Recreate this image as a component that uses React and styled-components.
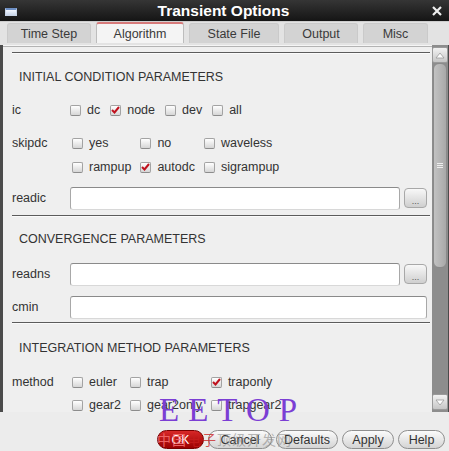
import React from 'react';
import styled, { createGlobalStyle } from 'styled-components';

const GlobalStyle = createGlobalStyle`
  html, body {
    margin: 0;
    padding: 0;
    background: #ececec;
  }
  body {
    font-family: "Liberation Sans", Arial, sans-serif;
  }
`;

const Window = styled.div`
  position: relative;
  width: 449px;
  height: 451px;
  display: flex;
  flex-direction: column;
  background: #ececec;
  overflow: hidden;
  font-size: 12.5px;
  color: #333;
`;

const TitleBar = styled.div`
  height: 21px;
  flex-shrink: 0;
  display: grid;
  grid-template-columns: 1fr auto 1fr;
  align-items: center;
  padding: 0 7px 0 5px;
  background: linear-gradient(#353535, #151515);
  color: #fff;
  font-weight: bold;
  font-size: 15.5px;
`;

const WinIcon = styled.span`
  width: 12px;
  height: 8px;
  box-sizing: border-box;
  border: 1px solid #c8d4e6;
  border-top: 2px solid #6d8fc4;
  background: linear-gradient(#f4f8ff, #c9d6ea);
  margin-top: 2px;
`;

const Close = styled.span`
  justify-self: end;
  display: flex;
`;

const TabBar = styled.div`
  height: 24px;
  flex-shrink: 0;
  box-sizing: border-box;
  display: flex;
  align-items: flex-end;
  gap: 5px;
  padding: 0 0 2px 7px;
  background: #e3e3e3;
  border-top: 1px solid #cdcdcd;
`;

const Tab = styled.div`
  width: ${({ $w }) => $w}px;
  height: ${({ $active }) => ($active ? 21 : 20)}px;
  box-sizing: border-box;
  display: flex;
  align-items: center;
  justify-content: center;
  background: ${({ $active }) => ($active ? '#f4f4f4' : '#d3d3d3')};
  border: 1px solid ${({ $active }) => ($active ? '#bdbdbd' : '#cacaca')};
  border-top: ${({ $active }) => ($active ? '2px solid #d77a7a' : '1px solid #cacaca')};
  border-bottom: none;
  border-radius: 3px 3px 0 0;
  color: #3a3a3a;
`;

const Body = styled.div`
  height: 367px;
  flex-shrink: 0;
  display: flex;
  border-left: 3px solid #4b4b4b;
  border-right: 1px solid #4b4b4b;
  background: #f5f5f5;
`;

const Viewport = styled.div`
  flex: 1;
  overflow: hidden;
  margin-top: 1px;
  border-top: 1px solid #b3b3b3;
  background: #efefef;
  padding-top: 5px;
`;

const Section = styled.div`
  margin: 0 2px 0 9px;
  border-top: 1px solid #5c5c5c;
  box-shadow: inset 0 1px 0 #fbfbfb;
  padding-bottom: ${({ $pb }) => $pb || 0}px;
`;

const Heading = styled.div`
  height: ${({ $h }) => $h}px;
  display: flex;
  align-items: center;
  padding-left: 7px;
  color: #333;
`;

const Row = styled.div`
  display: flex;
  align-items: ${({ $top }) => ($top ? 'flex-start' : 'center')};
  min-height: ${({ $h }) => $h || 18}px;
  margin-top: ${({ $mt }) => $mt || 0}px;
  padding-right: 3px;
`;

const Label = styled.div`
  width: 58px;
  flex-shrink: 0;
  line-height: 18px;
  color: #333;
`;

const Inline = styled.div`
  display: flex;
  align-items: center;
  gap: 10px;
  height: 18px;
`;

const Grid = styled.div`
  display: grid;
  grid-template-columns: auto auto auto;
  column-gap: 9px;
  row-gap: ${({ $rg }) => $rg}px;
  margin-left: 2px;
`;

const Check = styled.label`
  display: inline-flex;
  align-items: center;
  gap: 6px;
  height: 18px;
  color: #333;
`;

const Box = styled.span`
  width: 11px;
  height: 11px;
  box-sizing: border-box;
  border: 1px solid #a3a3a3;
  border-bottom-color: #8c8c8c;
  border-radius: 2px;
  background: linear-gradient(#ffffff, #d6d6d6);
  display: inline-flex;
  align-items: center;
  justify-content: center;
  flex-shrink: 0;
`;

const Field = styled.div`
  flex: 1;
  height: 23px;
  box-sizing: border-box;
  background: #fff;
  border: 1px solid #a8a8a8;
  border-top-color: #8a8a8a;
  border-bottom-color: #d8d8d8;
  border-radius: 3px;
`;

const DotsButton = styled.div`
  width: 23px;
  height: 20px;
  margin-left: 4px;
  box-sizing: border-box;
  border: 1px solid #a8a8a8;
  border-radius: 4px;
  background: linear-gradient(#f8f8f8, #cfcfcf);
  display: flex;
  align-items: flex-end;
  justify-content: center;
  font-size: 9px;
  line-height: 12px;
  color: #555;
`;

const Scrollbar = styled.div`
  width: 16px;
  flex-shrink: 0;
  display: flex;
  flex-direction: column;
  padding: 2px 0;
  box-sizing: border-box;
  background: #8d8d8d;
`;

const Arrow = styled.div`
  height: 16px;
  flex-shrink: 0;
  box-sizing: border-box;
  border: 1px solid #9a9a9a;
  border-radius: 2px;
  background: linear-gradient(#f2f2f2, #c6c6c6);
  display: flex;
  align-items: center;
  justify-content: center;
`;

const Track = styled.div`
  flex: 1;
  padding: 0 1px;
`;

const Thumb = styled.div`
  height: 205px;
  box-sizing: border-box;
  border: 1px solid #8a8a8a;
  border-radius: 6px;
  background: linear-gradient(90deg, #c2c2c2, #b3b3b3 60%, #a8a8a8);
  display: flex;
  align-items: center;
  justify-content: center;
`;

const Grip = styled.div`
  width: 6px;
  height: 6px;
  background: repeating-linear-gradient(#eee 0 1px, transparent 1px 2px);
`;

const Footer = styled.div`
  flex: 1;
  display: flex;
  justify-content: flex-end;
  align-items: flex-start;
  gap: 4px;
  padding: 18px 4px 0 0;
  background: #ececec;
`;

const Button = styled.div`
  width: ${({ $w }) => $w}px;
  height: 19px;
  box-sizing: border-box;
  display: flex;
  align-items: center;
  justify-content: center;
  border: 1px solid ${({ $primary }) => ($primary ? '#7a0000' : '#8f8f8f')};
  border-radius: 10px;
  background: ${({ $primary }) =>
    $primary ? 'linear-gradient(#d82828, #9a0000)' : 'linear-gradient(#fbfbfb, #d4d4d4)'};
  color: ${({ $primary }) => ($primary ? '#fff' : '#333')};
`;

const Watermark = styled.div`
  position: absolute;
  left: ${({ $x }) => $x}px;
  top: ${({ $y }) => $y}px;
  pointer-events: none;
  white-space: nowrap;
`;

const Logo = styled.span`
  font-family: "Liberation Serif", "Times New Roman", serif;
  font-size: 33px;
  letter-spacing: 9px;
  color: #7b3ed4;
`;

const Cn = styled.span`
  font-family: "Noto Sans CJK SC", sans-serif;
  font-size: 14px;
  letter-spacing: 1px;
  color: ${({ $tone }) =>
    $tone === 'light' ? 'rgba(245, 110, 110, 0.9)' : $tone === 'red' ? 'rgba(200, 30, 30, 0.75)' : 'rgba(130, 130, 130, 0.55)'};
`;

const Tick = () => (
  <svg width="9" height="8" viewBox="0 0 9 8">
    <path d="M1 4 L3.5 6.5 L8 1" fill="none" stroke="#c0121e" strokeWidth="2" />
  </svg>
);

const CheckItem = ({ label, checked }) => (
  <Check>
    <Box>{checked && <Tick />}</Box>
    {label}
  </Check>
);

const tabs = [
  { name: 'Time Step', w: 84 },
  { name: 'Algorithm', w: 88, active: true },
  { name: 'State File', w: 90 },
  { name: 'Output', w: 74 },
  { name: 'Misc', w: 65 }
];

const App = () => (
  <Window>
    <GlobalStyle />
    <TitleBar>
      <WinIcon />
      <span>Transient Options</span>
      <Close>
        <svg width="10" height="10" viewBox="0 0 10 10">
          <path d="M1 1 L9 9 M9 1 L1 9" stroke="#eee" strokeWidth="2.2" />
        </svg>
      </Close>
    </TitleBar>

    <TabBar>
      {tabs.map((t) => (
        <Tab key={t.name} $w={t.w} $active={t.active}>
          {t.name}
        </Tab>
      ))}
    </TabBar>

    <Body>
      <Viewport>
        <Section $pb={5}>
          <Heading $h={48}>INITIAL CONDITION PARAMETERS</Heading>
          <Row>
            <Label>ic</Label>
            <Inline>
              <CheckItem label="dc" />
              <CheckItem label="node" checked />
              <CheckItem label="dev" />
              <CheckItem label="all" />
            </Inline>
          </Row>
          <Row $top $mt={15}>
            <Label>skipdc</Label>
            <Grid $rg={6}>
              <CheckItem label="yes" />
              <CheckItem label="no" />
              <CheckItem label="waveless" />
              <CheckItem label="rampup" />
              <CheckItem label="autodc" checked />
              <CheckItem label="sigrampup" />
            </Grid>
          </Row>
          <Row $h={24} $mt={10}>
            <Label>readic</Label>
            <Field />
            <DotsButton>...</DotsButton>
          </Row>
        </Section>

        <Section $pb={3}>
          <Heading $h={46}>CONVERGENCE PARAMETERS</Heading>
          <Row $h={24}>
            <Label>readns</Label>
            <Field />
            <DotsButton>...</DotsButton>
          </Row>
          <Row $h={24} $mt={9}>
            <Label>cmin</Label>
            <Field />
          </Row>
        </Section>

        <Section>
          <Heading $h={50}>INTEGRATION METHOD PARAMETERS</Heading>
          <Row $top>
            <Label>method</Label>
            <Grid $rg={5}>
              <CheckItem label="euler" />
              <CheckItem label="trap" />
              <CheckItem label="traponly" checked />
              <CheckItem label="gear2" />
              <CheckItem label="gear2only" />
              <CheckItem label="trapgear2" />
            </Grid>
          </Row>
        </Section>
      </Viewport>

      <Scrollbar>
        <Arrow>
          <svg width="10" height="7" viewBox="0 0 10 7">
            <path d="M1 6 L5 1 L9 6 Z" fill="#fdfdfd" stroke="#9a9a9a" strokeWidth="0.8" />
          </svg>
        </Arrow>
        <Track>
          <Thumb>
            <Grip />
          </Thumb>
        </Track>
        <Arrow>
          <svg width="10" height="7" viewBox="0 0 10 7">
            <path d="M1 1 L5 6 L9 1 Z" fill="#fdfdfd" stroke="#9a9a9a" strokeWidth="0.8" />
          </svg>
        </Arrow>
      </Scrollbar>
    </Body>

    <Footer>
      <Button $w={47} $primary>OK</Button>
      <Button $w={64}>Cancel</Button>
      <Button $w={62}>Defaults</Button>
      <Button $w={52}>Apply</Button>
      <Button $w={47}>Help</Button>
    </Footer>

    <Watermark $x={159} $y={392}>
      <Logo>EETOP</Logo>
    </Watermark>
    <Watermark $x={157} $y={429}>
      <Cn $tone="light">中国</Cn>
      <Cn $tone="red">电子</Cn>
      <Cn>顶级开发网</Cn>
    </Watermark>
  </Window>
);

export default App;
